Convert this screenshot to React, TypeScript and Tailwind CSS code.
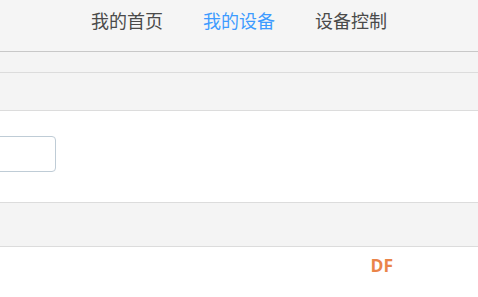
export default function App() {
  const tabs = [
    { label: '我的首页', active: false },
    { label: '我的设备', active: true },
    { label: '设备控制', active: false },
  ];

  return (
    <div className="w-[478px] h-[297px] overflow-hidden bg-white font-['Noto_Sans_CJK_SC',sans-serif]">
      {/* top nav */}
      <div className="h-[52px] bg-[#f5f5f5] border-b border-[#c8c8c8] flex justify-center gap-[40px] pt-[8px]">
        {tabs.map((t) => (
          <span
            key={t.label}
            className={`text-[18px] leading-[24px] ${t.active ? 'text-[#3d9bff]' : 'text-[#4a4a4a]'}`}
          >
            {t.label}
          </span>
        ))}
      </div>

      <div className="h-[21px] bg-[#f4f4f4] border-b border-[#dcdcdc]" />
      <div className="h-[38px] bg-[#f4f4f4] border-b border-[#dcdcdc]" />

      {/* content */}
      <div className="h-[91px] bg-white pt-[25px]">
        <div className="-ml-[100px] w-[156px] h-[36px] rounded-[4px] border border-[#bfccd6] bg-white" />
      </div>

      <div className="h-[45px] bg-[#f4f4f4] border-y border-[#dcdcdc]" />

      {/* footer */}
      <div className="flex justify-end pr-[85px] pt-[6px]">
        <span className="text-[17.5px] leading-[24px] font-bold text-[#ea8449] font-['Open_Sans',sans-serif]">DF</span>
      </div>
    </div>
  );
}
